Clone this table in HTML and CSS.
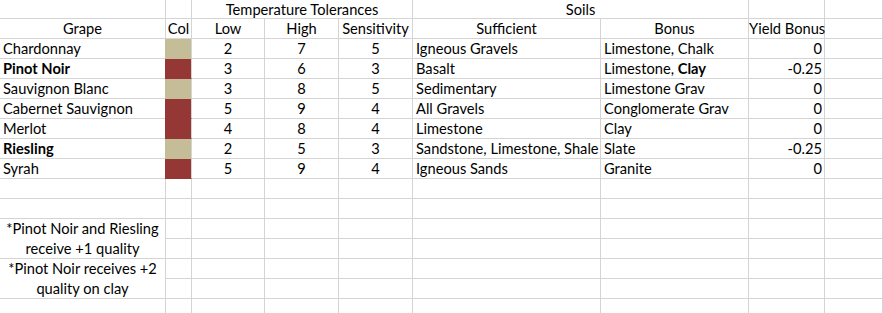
FILE: index.html
```html
<!DOCTYPE html>
<html>
<head>
<meta charset="utf-8">
<link rel="stylesheet" href="styles.css">
</head>
<body>
<div class="sheet">
  <!-- row 1 -->
  <div class="c top"></div>
  <div class="c top"></div>
  <div class="c top ctr span3">Temperature Tolerances</div>
  <div class="c top ctr span2">Soils</div>
  <div class="c top"></div>
  <div class="c top"></div>

  <!-- row 2 -->
  <div class="c ctr">Grape</div>
  <div class="c ctr">Col</div>
  <div class="c ctr">Low</div>
  <div class="c ctr">High</div>
  <div class="c ctr">Sensitivity</div>
  <div class="c ctr">Sufficient</div>
  <div class="c ctr">Bonus</div>
  <div class="c ctr over">Yield Bonus</div>
  <div class="c"></div>

  <!-- data -->
  <div class="c">Chardonnay</div>
  <div class="c sw tan"></div>
  <div class="c ctr">2</div><div class="c ctr">7</div><div class="c ctr">5</div>
  <div class="c">Igneous Gravels</div>
  <div class="c">Limestone, Chalk</div>
  <div class="c num">0</div>
  <div class="c"></div>

  <div class="c b">Pinot Noir</div>
  <div class="c sw red"></div>
  <div class="c ctr">3</div><div class="c ctr">6</div><div class="c ctr">3</div>
  <div class="c">Basalt</div>
  <div class="c">Limestone, <b>Clay</b></div>
  <div class="c num">-0.25</div>
  <div class="c"></div>

  <div class="c">Sauvignon Blanc</div>
  <div class="c sw tan"></div>
  <div class="c ctr">3</div><div class="c ctr">8</div><div class="c ctr">5</div>
  <div class="c">Sedimentary</div>
  <div class="c">Limestone Grav</div>
  <div class="c num">0</div>
  <div class="c"></div>

  <div class="c">Cabernet Sauvignon</div>
  <div class="c sw red"></div>
  <div class="c ctr">5</div><div class="c ctr">9</div><div class="c ctr">4</div>
  <div class="c">All Gravels</div>
  <div class="c">Conglomerate Grav</div>
  <div class="c num">0</div>
  <div class="c"></div>

  <div class="c">Merlot</div>
  <div class="c sw red"></div>
  <div class="c ctr">4</div><div class="c ctr">8</div><div class="c ctr">4</div>
  <div class="c">Limestone</div>
  <div class="c">Clay</div>
  <div class="c num">0</div>
  <div class="c"></div>

  <div class="c b">Riesling</div>
  <div class="c sw tan"></div>
  <div class="c ctr">2</div><div class="c ctr">5</div><div class="c ctr">3</div>
  <div class="c over">Sandstone, Limestone, Shale</div>
  <div class="c">Slate</div>
  <div class="c num">-0.25</div>
  <div class="c"></div>

  <div class="c">Syrah</div>
  <div class="c sw red"></div>
  <div class="c ctr">5</div><div class="c ctr">9</div><div class="c ctr">4</div>
  <div class="c">Igneous Sands</div>
  <div class="c">Granite</div>
  <div class="c num">0</div>
  <div class="c"></div>

  <!-- rows 10, 11 -->
  <div class="c"></div><div class="c"></div><div class="c"></div><div class="c"></div><div class="c"></div><div class="c"></div><div class="c"></div><div class="c"></div><div class="c"></div>
  <div class="c"></div><div class="c"></div><div class="c"></div><div class="c"></div><div class="c"></div><div class="c"></div><div class="c"></div><div class="c"></div><div class="c"></div>

  <!-- notes -->
  <div class="c note">*Pinot Noir and Riesling receive +1 quality</div>
  <div class="c"></div><div class="c"></div><div class="c"></div><div class="c"></div><div class="c"></div><div class="c"></div><div class="c"></div><div class="c"></div>
  <div class="c"></div><div class="c"></div><div class="c"></div><div class="c"></div><div class="c"></div><div class="c"></div><div class="c"></div><div class="c"></div>

  <div class="c note">*Pinot Noir receives +2 quality on clay</div>
  <div class="c"></div><div class="c"></div><div class="c"></div><div class="c"></div><div class="c"></div><div class="c"></div><div class="c"></div><div class="c"></div>
  <div class="c"></div><div class="c"></div><div class="c"></div><div class="c"></div><div class="c"></div><div class="c"></div><div class="c"></div><div class="c"></div>

  <!-- row 16 -->
  <div class="c"></div><div class="c"></div><div class="c"></div><div class="c"></div><div class="c"></div><div class="c"></div><div class="c"></div><div class="c"></div><div class="c"></div>
</div>
</body>
</html>
```

FILE: styles.css
```css
html, body {
  margin: 0;
  padding: 0;
  background: #ffffff;
  overflow: hidden;
}

.sheet {
  display: grid;
  grid-template-columns: 166px 26px 73px 74px 74px 188px 148px 76px 1fr;
  grid-template-rows: 19px repeat(15, 20px);
  width: 100%;
  font-family: Lato, "Liberation Sans", sans-serif;
  font-size: 14.67px;
  color: #000000;
}

.c {
  box-sizing: border-box;
  min-width: 0;
  border-right: 1px solid #d4d4d4;
  border-bottom: 1px solid #d4d4d4;
  padding: 0 2px 0 3px;
  line-height: 19px;
  white-space: nowrap;
}

.ctr { text-align: center; padding: 0; }
.num { text-align: right; padding-right: 2px; }
.b, b { font-weight: 700; }
.span3 { grid-column: span 3; }
.span2 { grid-column: span 2; }
.over { overflow: visible; }

.tan { background: #c4bd97; border-bottom-color: #c4bd97; box-shadow: -1px 0 0 #c4bd97; }
.red { background: #953735; border-bottom-color: #953735; box-shadow: -1px 0 0 #953735; }

.note {
  grid-row: span 2;
  white-space: normal;
  text-align: center;
  line-height: 20px;
  padding: 0 6px;
}
```
